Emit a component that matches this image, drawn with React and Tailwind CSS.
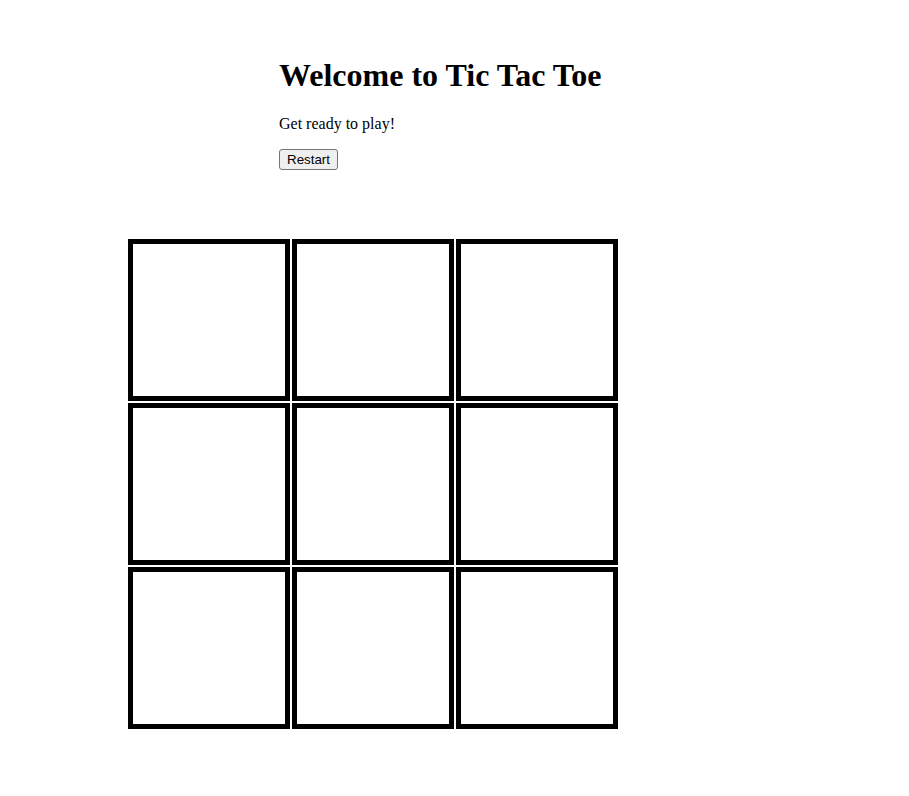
import { useState } from "react";

export default function App() {
  const [board, setBoard] = useState(Array(9).fill(null));
  const [turn, setTurn] = useState("X");

  // clic sur une case
  const play = (i) => {
    if (board[i]) return;
    const next = [...board];
    next[i] = turn;
    setBoard(next);
    setTurn(turn === "X" ? "O" : "X");
  };

  const restart = () => {
    setBoard(Array(9).fill(null));
    setTurn("X");
  };

  return (
    <div className="min-h-[796px] bg-white text-black font-['Liberation_Serif',serif]">
      {/* En-tête */}
      <div className="pt-[57px] pl-[279px]">
        <h1 className="text-[32px] leading-[37px] font-bold">Welcome to Tic Tac Toe</h1>
        <p className="mt-[21px] text-base leading-[18px]">Get ready to play!</p>
        <button
          onClick={restart}
          className="mt-4 h-[21px] px-[7px] border border-[#767676] bg-[#efefef] rounded-[3px] text-[13.33px] leading-[17px] font-['Liberation_Sans',Arial,sans-serif]"
        >
          Restart
        </button>
      </div>

      {/* Plateau */}
      <div className="mt-[68px] ml-[128px] grid grid-cols-[repeat(3,162px)] grid-rows-[repeat(3,162px)] gap-[2px] w-[490px]">
        {board.map((cell, i) => (
          <div
            key={i}
            onClick={() => play(i)}
            className="border-[5px] border-black bg-white flex items-center justify-center text-6xl font-bold cursor-pointer"
          >
            {cell}
          </div>
        ))}
      </div>
    </div>
  );
}
